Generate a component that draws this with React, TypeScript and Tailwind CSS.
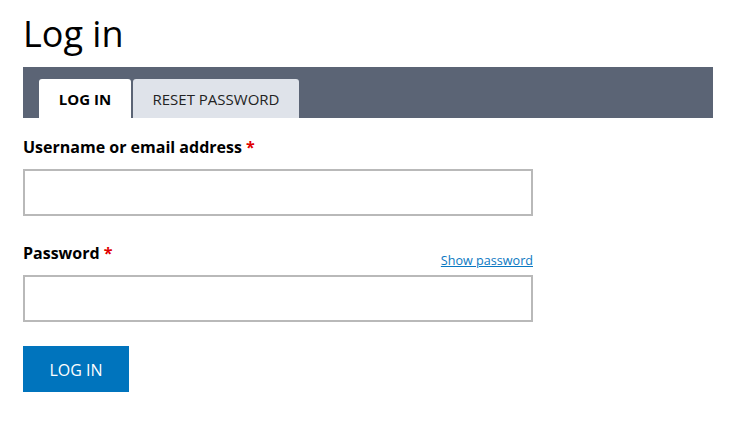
export default function App() {
  return (
    <div className="min-h-screen bg-white pl-[23px] pr-[17px] pt-[12px] text-black" style={{ fontFamily: '"Open Sans", sans-serif' }}>
      <h1 className="text-[36px] leading-[43px] font-normal">Log in</h1>

      {/* Tabs */}
      <div className="mt-[12px] flex h-[51px] items-end gap-[2px] bg-[#5b6475] pl-[16px]">
        <div className="flex h-[39px] w-[92px] items-center justify-center rounded-t-[3px] bg-white pt-[2px] text-[15px] font-bold">
          LOG IN
        </div>
        <div className="flex h-[39px] w-[166px] items-center justify-center rounded-t-[3px] bg-[#dfe3ea] pt-[2px] text-[15px] text-[#222]">
          RESET PASSWORD
        </div>
      </div>

      <form className="w-[510px]" onSubmit={(e) => e.preventDefault()}>
        <label className="mt-[17px] block text-[16px] leading-[24px] font-bold">
          Username or email address <span className="text-[#e00000]">*</span>
        </label>
        <input
          type="text"
          className="mt-[10px] block h-[47px] w-full border-2 border-[#b9b9b9] bg-white px-3 outline-none"
        />

        <div className="mt-[25px] flex items-end justify-between">
          <label className="block text-[16px] leading-[24px] font-bold">
            Password <span className="text-[#e00000]">*</span>
          </label>
          <a href="#" className="mb-[-6px] text-[12.6px] leading-[20px] text-[#0a78c2] underline">
            Show password
          </a>
        </div>
        <input
          type="password"
          className="mt-[10px] block h-[47px] w-full border-2 border-[#b9b9b9] bg-white px-3 outline-none"
        />

        <button
          type="submit"
          className="mt-[24px] flex h-[46px] w-[106px] items-center justify-center bg-[#0074bd] pt-[2px] text-[16px] text-white"
        >
          LOG IN
        </button>
      </form>
    </div>
  )
}
